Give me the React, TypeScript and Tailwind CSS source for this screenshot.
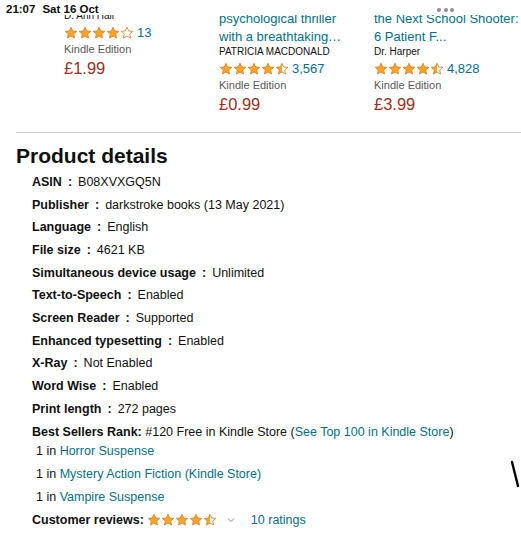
import React from 'react';

type Rating = { full: number; half: boolean };

const Star: React.FC<{ fill: 'full' | 'half' | 'empty'; size: number; id: string }> = ({ fill, size, id }) => {
    const d = 'M12 2.2l2.9 6.3 6.9.7-5.2 4.6 1.5 6.8L12 17.1l-6.1 3.5 1.5-6.8-5.2-4.6 6.9-.7z';
    return (
        <svg width={size} height={size} viewBox="0 0 24 24" className="shrink-0">
            <defs>
                <linearGradient id={id} x1="0" x2="1" y1="0" y2="0">
                    <stop offset="50%" stopColor="#ffa41c" />
                    <stop offset="50%" stopColor="#ffffff" />
                </linearGradient>
            </defs>
            <path
                d={d}
                fill={fill === 'full' ? '#ffa41c' : fill === 'half' ? `url(#${id})` : '#ffffff'}
                stroke="#de7921"
                strokeWidth="1.4"
                strokeLinejoin="round"
            />
        </svg>
    );
};

const Stars: React.FC<{ rating: Rating; size?: number; keyId: string }> = ({ rating, size = 14, keyId }) => (
    <div className="flex items-center">
        {[0, 1, 2, 3, 4].map(i => (
            <Star
                key={i}
                id={`${keyId}-${i}`}
                size={size}
                fill={i < rating.full ? 'full' : i === rating.full && rating.half ? 'half' : 'empty'}
            />
        ))}
    </div>
);

const books = [
    { title: ['Lost Without You', ''], author: 'D. Ann Hall', rating: { full: 4, half: false }, count: '13', price: '£1.99', offset: true },
    { title: ['psychological thriller', 'with a breathtaking…'], author: 'PATRICIA MACDONALD', rating: { full: 4, half: true }, count: '3,567', price: '£0.99', offset: false },
    { title: ['the Next School Shooter:', '6 Patient F...'], author: 'Dr. Harper', rating: { full: 4, half: true }, count: '4,828', price: '£3.99', offset: false },
];

const details: [string, string][] = [
    ['ASIN', 'B08XVXGQ5N'],
    ['Publisher', 'darkstroke books (13 May 2021)'],
    ['Language', 'English'],
    ['File size', '4621 KB'],
    ['Simultaneous device usage', 'Unlimited'],
    ['Text-to-Speech', 'Enabled'],
    ['Screen Reader', 'Supported'],
    ['Enhanced typesetting', 'Enabled'],
    ['X-Ray', 'Not Enabled'],
    ['Word Wise', 'Enabled'],
    ['Print length', '272 pages'],
];

const App: React.FC = () => {
    return (
        <div className="relative w-[521px] h-[540px] overflow-hidden bg-white text-[#0f1111]" style={{ fontFamily: '"Liberation Sans", Arial, sans-serif' }}>
            {/* status bar */}
            <div className="absolute top-0 left-0 right-0 h-[15px] bg-white z-10">
                <div className="absolute left-[6px] top-[4px] text-[11.5px] font-semibold leading-none flex gap-[7px]">
                    <span>21:07</span>
                    <span>Sat 16 Oct</span>
                </div>
                <div className="absolute left-[437px] top-[8px] flex gap-[2.5px]">
                    <span className="w-[4px] h-[4px] rounded-full bg-[#8e8e93]" />
                    <span className="w-[4px] h-[4px] rounded-full bg-[#8e8e93]" />
                    <span className="w-[4px] h-[4px] rounded-full bg-[#8e8e93]" />
                </div>
            </div>

            {/* carousel */}
            <div className="flex pl-[64px] pt-[10px] h-[132px] overflow-hidden">
                {books.map((b, idx) => (
                    <div key={idx} className={`w-[155px] shrink-0 flex flex-col ${b.offset ? 'mt-[-27px]' : ''}`}>
                        {!b.offset && (
                            <div className="text-[13px] leading-[17.5px] text-[#007185] whitespace-nowrap">
                                <div>{b.title[0]}</div>
                                <div>{b.title[1]}</div>
                            </div>
                        )}
                        <div className={`text-[10px] leading-[14px] whitespace-nowrap ${b.offset ? 'mt-[26px]' : ''}`}>{b.author}</div>
                        <div className="flex items-center gap-[3px] h-[17px] mt-[1px]">
                            <Stars rating={b.rating} keyId={`b${idx}`} />
                            <span className="text-[13px] text-[#007185] leading-none">{b.count}</span>
                        </div>
                        <div className="text-[11px] leading-[15px] text-[#565959] mt-[1px]">Kindle Edition</div>
                        <div className="text-[16.5px] leading-[20px] text-[#9b2f1c] mt-[1px]">{b.price}</div>
                    </div>
                ))}
            </div>

            <div className="ml-[16px] border-t border-[#cccccc]" />

            <div className="pl-[16px] pt-[11px]">
                <h2 className="text-[21px] font-bold leading-[24px] text-[#0f1111]">Product details</h2>
                <div className="pl-[16px] mt-[3px] text-[12.5px]">
                    {details.map(([k, v]) => (
                        <div key={k} className="h-[22.7px] flex items-center">
                            <span className="font-bold">{k}</span>
                            <span className="mx-[6px] font-bold">:</span>
                            <span>{v}</span>
                        </div>
                    ))}
                    <div className="h-[22.7px] flex items-center">
                        <span className="font-bold">Best Sellers Rank:</span>
                        <span>&nbsp;#120 Free in Kindle Store (<span className="text-[#007185]">See Top 100 in Kindle Store</span>)</span>
                    </div>
                    <div className="pl-[4px]">
                        <div className="h-[22.7px] mt-[-3.5px] flex items-center">1 in&nbsp;<span className="text-[#007185]">Horror Suspense</span></div>
                        <div className="h-[22.7px] mt-[0.5px] flex items-center">1 in&nbsp;<span className="text-[#007185]">Mystery Action Fiction (Kindle Store)</span></div>
                        <div className="h-[22.7px] flex items-center">1 in&nbsp;<span className="text-[#007185]">Vampire Suspense</span></div>
                    </div>
                    <div className="h-[22.7px] flex items-center mt-[0.5px]">
                        <span className="font-bold">Customer reviews:</span>
                        <span className="ml-[3px]"><Stars rating={{ full: 4, half: true }} size={14} keyId="cr" /></span>
                        <svg width="8" height="6" viewBox="0 0 8 6" className="ml-[10px]">
                            <path d="M1 1.5l3 3 3-3" fill="none" stroke="#8a8a8a" strokeWidth="1" />
                        </svg>
                        <span className="ml-[16px] text-[#007185]">10 ratings</span>
                    </div>
                </div>
            </div>

            {/* stray mark at the right edge */}
            <svg className="absolute left-[510px] top-[460px]" width="11" height="28" viewBox="0 0 11 28">
                <path d="M2 2l6 24" stroke="#000" strokeWidth="2.4" strokeLinecap="round" />
            </svg>
        </div>
    );
};

export default App;
